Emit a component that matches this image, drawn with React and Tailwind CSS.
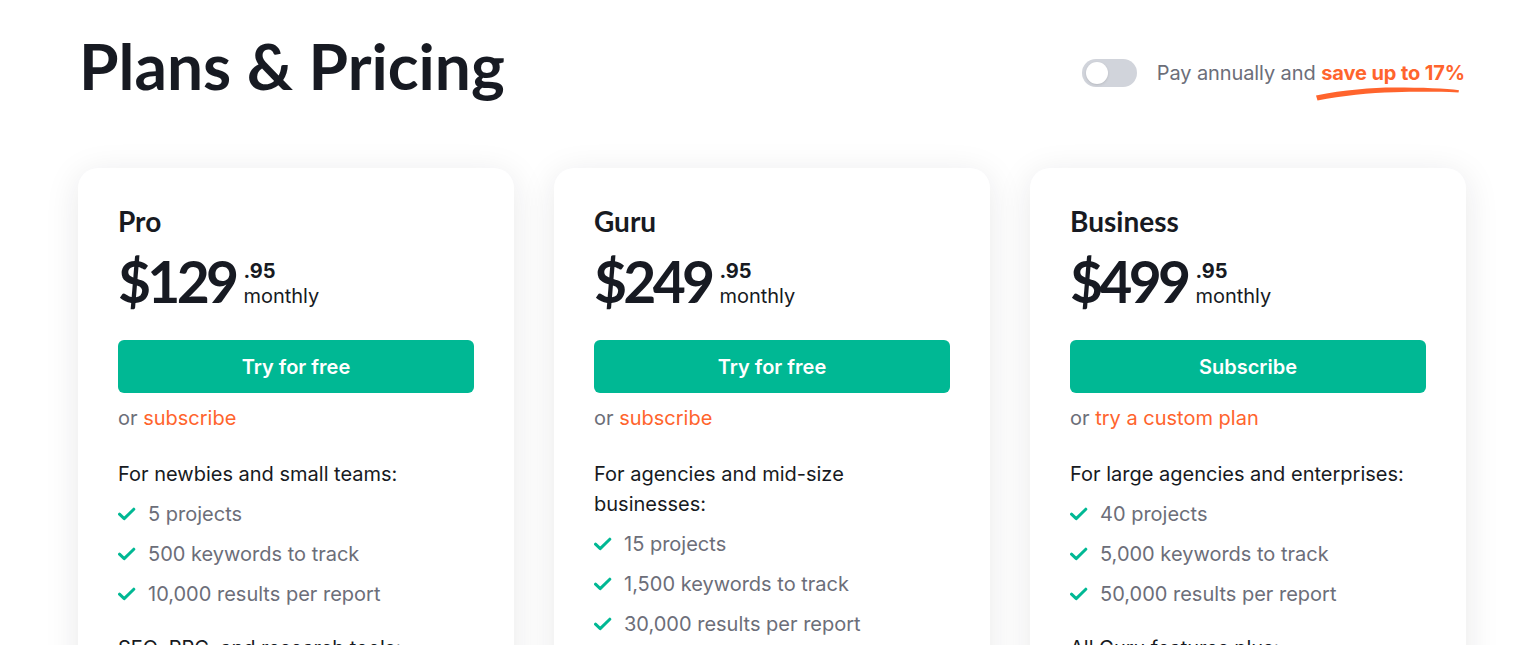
import React from "react";

const plans = [
  {
    name: "Pro",
    price: "$129",
    cents: ".95",
    cta: "Try for free",
    alt: "subscribe",
    desc: "For newbies and small teams:",
    items: ["5 projects", "500 keywords to track", "10,000 results per report"],
    next: "SEO, PPC, and research tools:",
  },
  {
    name: "Guru",
    price: "$249",
    cents: ".95",
    cta: "Try for free",
    alt: "subscribe",
    desc: "For agencies and mid-size businesses:",
    items: ["15 projects", "1,500 keywords to track", "30,000 results per report"],
    next: "All Pro features plus:",
  },
  {
    name: "Business",
    price: "$499",
    cents: ".95",
    cta: "Subscribe",
    alt: "try a custom plan",
    desc: "For large agencies and enterprises:",
    items: ["40 projects", "5,000 keywords to track", "50,000 results per report"],
    next: "All Guru features plus:",
  },
];

const Check = () => (
  <svg width="18" height="14" viewBox="0 0 18 14" fill="none" className="shrink-0">
    <path
      d="M1.5 7.2 L6.2 11.6 L15.8 2.2"
      stroke="#00b894"
      strokeWidth="3"
      strokeLinecap="round"
      strokeLinejoin="round"
    />
  </svg>
);

const PlanCard = ({ plan }) => (
  <div className="w-[436px] shrink-0 rounded-[20px] bg-white px-10 pt-9 pb-10 shadow-[0_6px_34px_rgba(25,27,35,0.1)]">
    <h2 className="font-['Lato',sans-serif] text-[28px] font-bold leading-[34px] text-[#171a22]">
      {plan.name}
    </h2>

    {/* Price */}
    <div className="mt-[15px] flex items-end">
      <span className="font-['Lato',sans-serif] text-[57px] font-bold leading-none tracking-[-0.065em] text-[#171a22]">
        {plan.price}
      </span>
      <div className="mb-[2px] ml-[8px] flex flex-col">
        <span className="text-[20px] font-bold leading-[22px] text-[#171a22]">{plan.cents}</span>
        <span className="mt-[2px] text-[20px] leading-[24px] text-[#171a22]">monthly</span>
      </div>
    </div>

    <button className="mt-[30px] flex h-[53px] w-full items-center justify-center rounded-[6px] bg-[#00b894] text-[20px] font-semibold text-white">
      {plan.cta}
    </button>

    <p className="mt-[11px] text-[20px] leading-[28px] text-[#6c6e79]">
      or <span className="text-[#ff642d]">{plan.alt}</span>
    </p>

    <p className="mt-[27px] text-[20px] leading-[30px] text-[#171a22]">{plan.desc}</p>
    <ul className="mt-[11px] flex flex-col gap-3">
      {plan.items.map((item) => (
        <li key={item} className="flex items-center gap-3 text-[20px] leading-[28px] text-[#6c6e79]">
          <Check />
          {item}
        </li>
      ))}
    </ul>

    <p className="mt-[25px] text-[20px] leading-[30px] text-[#171a22]">{plan.next}</p>
  </div>
);

export default function App() {
  return (
    <div className="h-[645px] overflow-hidden bg-white font-['Inter',sans-serif]">
      <div className="w-[1388px] pl-[78px] pt-[34px] box-content">
        {/* Header */}
        <div className="flex items-start justify-between">
          <h1 className="pl-[1px] font-['Lato',sans-serif] text-[64px] font-bold leading-none text-[#171a22]">
            Plans &amp; Pricing
          </h1>
          <div className="mt-[25px] mr-[1px] flex h-[28px] items-center">
            <button className="relative h-[28px] w-[55px] rounded-full bg-[#d1d4db]">
              <span className="absolute left-[4px] top-[3px] h-[22px] w-[22px] rounded-full bg-white shadow-sm" />
            </button>
            <p className="ml-[20px] text-[20px] leading-[28px] tracking-[-0.005em] text-[#6c6e79]">
              Pay annually and{" "}
              <span className="relative font-bold text-[#ff642d]">
                save up to 17%
                <svg
                  className="absolute left-[-7px] top-[24px]"
                  width="148"
                  height="16"
                  viewBox="0 0 148 16"
                >
                  <path
                    d="M2 10.5 C30 5 58 2.6 80 2.6 C108 2.6 132 3.4 145 5.2 L144.5 7.4 C120 6.6 100 6.8 80 7.2 C56 7.8 28 10.5 3.5 15.5 Z"
                    fill="#ff642d"
                  />
                </svg>
              </span>
            </p>
          </div>
        </div>

        {/* Cards */}
        <div className="mt-[70px] flex gap-10">
          {plans.map((plan) => (
            <PlanCard key={plan.name} plan={plan} />
          ))}
        </div>
      </div>
    </div>
  );
}
